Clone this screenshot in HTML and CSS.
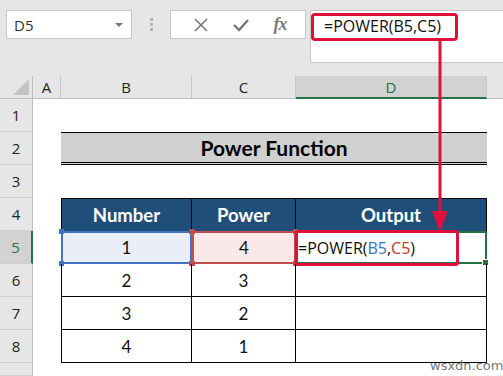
FILE: index.html
```html
<!DOCTYPE html>
<html lang="en">
<head>
    <meta charset="UTF-8">
    <title>Power Function</title>
    <link rel="stylesheet" href="styles.css">
</head>
<body>
    <!-- Formula bar -->
    <div class="toolbar">
        <div class="namebox">
            <span>D5</span>
            <span class="caret"></span>
        </div>
        <div class="grip"><i></i><i></i><i></i></div>
        <div class="fbtns">
            <svg width="14" height="14" viewBox="0 0 14 14"><path d="M1 1 L13 13 M13 1 L1 13" stroke="#777" stroke-width="1.6" fill="none"/></svg>
            <svg width="16" height="14" viewBox="0 0 16 14"><path d="M1 7 L6 12 L15 2" stroke="#777" stroke-width="2.4" fill="none"/></svg>
            <span class="fx">fx</span>
        </div>
        <div class="formula">
            =POWER(B5,C5)
            <div class="callout"></div>
        </div>
    </div>

    <!-- Sheet -->
    <div class="sheet">
        <div class="corner"><span></span></div>
        <div class="ch">A</div>
        <div class="ch">B</div>
        <div class="ch">C</div>
        <div class="ch active">D</div>
        <div class="ch last"></div>

        <div class="rh">1</div>
        <div class="c"></div><div class="c"></div><div class="c"></div><div class="c"></div><div class="c"></div>

        <div class="rh">2</div>
        <div class="c"></div>
        <div class="title">Power Function</div>
        <div class="c"></div>

        <div class="rh">3</div>
        <div class="c"></div><div class="c"></div><div class="c"></div><div class="c"></div><div class="c"></div>

        <div class="rh">4</div>
        <div class="c"></div>
        <div class="th first">Number</div>
        <div class="th">Power</div>
        <div class="th">Output</div>
        <div class="c"></div>

        <div class="rh active">5</div>
        <div class="c"></div>
        <div class="td first sel blue">1<i class="k tl"></i><i class="k tr"></i><i class="k bl"></i><i class="k br"></i></div>
        <div class="td sel red">4<i class="k tl"></i><i class="k tr"></i><i class="k bl"></i><i class="k br"></i></div>
        <div class="td cur">
            <span class="edit">=POWER(<b class="ref-b">B5</b>,<b class="ref-c">C5</b>)</span>
            <i class="handle"></i>
            <div class="editbox"></div>
        </div>
        <div class="c"></div>

        <div class="rh">6</div>
        <div class="c"></div>
        <div class="td first">2</div>
        <div class="td">3</div>
        <div class="td"></div>
        <div class="c"></div>

        <div class="rh">7</div>
        <div class="c"></div>
        <div class="td first">3</div>
        <div class="td">2</div>
        <div class="td"></div>
        <div class="c"></div>

        <div class="rh">8</div>
        <div class="c"></div>
        <div class="td first">4</div>
        <div class="td">1</div>
        <div class="td"></div>
        <div class="c"></div>

        <div class="rh"></div>
        <div class="c"></div><div class="c"></div><div class="c"></div><div class="c"></div><div class="c"></div>
    </div>

    <!-- arrow from formula bar down to D5 -->
    <svg class="arrow" width="20" height="194" viewBox="0 0 20 194">
        <rect x="8.5" y="0" width="3" height="176" fill="#e0103c"/>
        <path d="M2 172 L18 172 L10 193 Z" fill="#e0103c"/>
    </svg>

    <div class="mark">wsxdn.com</div>
</body>
</html>
```

FILE: styles.css
```css
body {
    margin: 0;
    width: 503px;
    height: 376px;
    overflow: hidden;
    background: #fff;
    font-family: Lato, "Open Sans", sans-serif;
    position: relative;
}

/* formula bar */
.toolbar {
    height: 76px;
    background: #e6e6e6;
    display: flex;
    align-items: flex-start;
    padding: 10px 0 0 6px;
    box-sizing: border-box;
}

.namebox {
    width: 126px;
    height: 29px;
    background: #fff;
    border: 1px solid #c6c6c6;
    box-sizing: border-box;
    display: flex;
    align-items: center;
    justify-content: space-between;
    padding: 0 8px 0 7px;
    font: 15px "Open Sans", sans-serif;
    color: #333;
}

.caret {
    width: 0;
    height: 0;
    border-left: 4px solid transparent;
    border-right: 4px solid transparent;
    border-top: 4px solid #777;
}

.grip {
    width: 38px;
    display: flex;
    flex-direction: column;
    align-items: center;
    gap: 2px;
    padding-top: 8px;
}

.grip i {
    width: 3px;
    height: 3px;
    background: #b4b4b4;
}

.fbtns {
    width: 136px;
    height: 29px;
    background: #fff;
    border: 1px solid #c6c6c6;
    box-sizing: border-box;
    display: flex;
    align-items: center;
    justify-content: space-around;
    padding: 0 6px 0 10px;
}

.fx {
    font: italic bold 18px "Liberation Serif", serif;
    color: #7a7a7a;
    letter-spacing: -1px;
}

.formula {
    flex: 1;
    height: 53px;
    margin-left: 4px;
    background: #fff;
    border: 1px solid #c6c6c6;
    border-right: none;
    box-sizing: border-box;
    padding: 4px 0 0 13px;
    font: 16px "Open Sans", sans-serif;
    color: #111;
    position: relative;
}

.callout {
    position: absolute;
    left: 0;
    top: 2px;
    width: 147px;
    height: 28px;
    border: 3px solid #e0103c;
    border-radius: 4px;
    box-sizing: border-box;
}

/* sheet grid */
.sheet {
    display: grid;
    grid-template-columns: 33px 28px 131px 104px 191px 16px;
    grid-template-rows: 23px repeat(8, 33px) 13px;
}

.corner {
    background: #e6e6e6;
    border-right: 1px solid #bdbdbd;
    border-bottom: 1px solid #bdbdbd;
    position: relative;
}

.corner span {
    position: absolute;
    right: 3px;
    bottom: 3px;
    width: 0;
    height: 0;
    border-left: 16px solid transparent;
    border-bottom: 16px solid #c4c4c4;
}

.ch, .rh {
    background: #e6e6e6;
    display: flex;
    align-items: center;
    justify-content: center;
    font: 15px "Open Sans", sans-serif;
    color: #222;
    box-sizing: border-box;
}

.ch {
    border-right: 1px solid #c8c8c8;
    border-bottom: 1px solid #bdbdbd;
}

.ch.last {
    border-right: none;
}

.ch.active {
    background: #d2d2d2;
    border-bottom: 2px solid #217346;
    color: #217346;
}

.rh {
    border-right: 1px solid #bdbdbd;
    border-bottom: 1px solid #cfcfcf;
}

.rh.active {
    background: #d2d2d2;
    border-right: 2px solid #217346;
    color: #217346;
}

.c {
    background: #fff;
}

.title {
    grid-column: span 3;
    background: #d0d0d0;
    border-top: 1px solid #000;
    border-bottom: 3px double #000;
    display: flex;
    align-items: center;
    justify-content: center;
    font-weight: bold;
    font-size: 21px;
    color: #000;
}

.th, .td {
    display: flex;
    align-items: center;
    justify-content: center;
    box-sizing: border-box;
    border-right: 1px solid #000;
    border-bottom: 1px solid #000;
    position: relative;
}

.th {
    background: #1f4e78;
    color: #fff;
    font-weight: bold;
    font-size: 18.5px;
    border-top: 1px solid #000;
    border-bottom: none;
}

.td {
    font-size: 17px;
    color: #111;
}

.first {
    border-left: 1px solid #000;
}

/* highlighted references */
.sel.blue {
    background: #e9eef8;
    border: 2px solid #4472c4;
}

.sel.red {
    background: #fbe9e9;
    border: 2px solid #c0504d;
}

.k {
    position: absolute;
    width: 5px;
    height: 5px;
}

.blue .k { background: #4472c4; }
.red .k { background: #c0504d; }

.k.tl { left: -4px; top: -4px; }
.k.tr { right: -4px; top: -4px; }
.k.bl { left: -4px; bottom: -4px; }
.k.br { right: -4px; bottom: -4px; }

/* active cell being edited */
.td.cur {
    border: 2px solid #217346;
    justify-content: flex-start;
    padding-left: 0;
}

.edit {
    font: 16px "Open Sans", sans-serif;
    color: #111;
}

.edit b {
    font-weight: normal;
}

.ref-b { color: #3a6fc0; }
.ref-c { color: #c0392b; }

.handle {
    position: absolute;
    right: -4px;
    bottom: -4px;
    width: 5px;
    height: 5px;
    background: #217346;
    border: 1px solid #fff;
}

.editbox {
    position: absolute;
    left: -3px;
    top: -3px;
    width: 164px;
    height: 36px;
    border: 3px solid #e0103c;
    border-radius: 3px;
    box-sizing: border-box;
}

.arrow {
    position: absolute;
    left: 430px;
    top: 39px;
}

.mark {
    position: absolute;
    left: 430px;
    top: 358px;
    font: 13px "DejaVu Sans", sans-serif;
    color: #777;
}
```
